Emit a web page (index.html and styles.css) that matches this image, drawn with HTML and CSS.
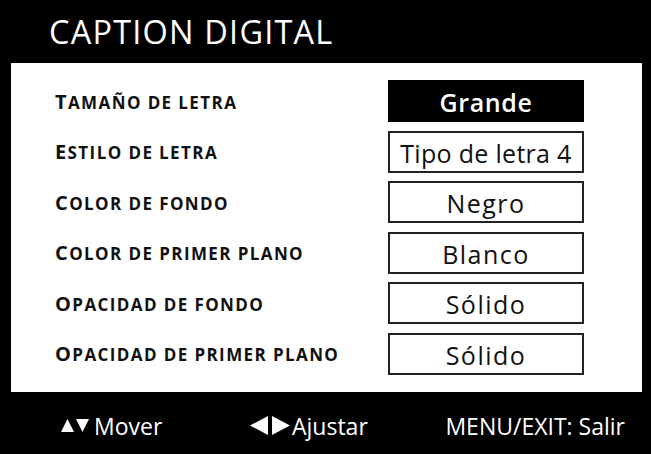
FILE: index.html
```html
<!DOCTYPE html>
<html>
<head>
    <title>Caption Digital</title>
    <link rel="stylesheet" href="styles.css">
</head>
<body>
    <div class="screen">
        <div class="title-bar">
            <h1 class="title">CAPTION DIGITAL</h1>
        </div>

        <div class="panel">
            <div class="option">
                <span class="option-label">Tamaño de letra</span>
                <span class="option-value selected">Grande</span>
            </div>
            <div class="option">
                <span class="option-label">Estilo de letra</span>
                <span class="option-value tight">Tipo de letra 4</span>
            </div>
            <div class="option">
                <span class="option-label">Color de fondo</span>
                <span class="option-value">Negro</span>
            </div>
            <div class="option">
                <span class="option-label">Color de primer plano</span>
                <span class="option-value">Blanco</span>
            </div>
            <div class="option">
                <span class="option-label">Opacidad de fondo</span>
                <span class="option-value">Sólido</span>
            </div>
            <div class="option">
                <span class="option-label">Opacidad de primer plano</span>
                <span class="option-value">Sólido</span>
            </div>
        </div>

        <div class="help-bar">
            <div class="hint hint-move">
                <svg class="arrows" width="28" height="13" viewBox="0 0 28 13">
                    <polygon points="0,13 6.5,0 13,13" fill="#fff"/>
                    <polygon points="15,0 28,0 21.5,13" fill="#fff"/>
                </svg>
                <span>Mover</span>
            </div>
            <div class="hint hint-adjust">
                <svg class="arrows" width="40" height="19" viewBox="0 0 40 19">
                    <polygon points="18,0 18,19 0,9.5" fill="#fff"/>
                    <polygon points="22,0 22,19 40,9.5" fill="#fff"/>
                </svg>
                <span>Ajustar</span>
            </div>
            <div class="hint hint-exit">MENU/EXIT: Salir</div>
        </div>
    </div>
</body>
</html>
```

FILE: styles.css
```css
body {
    margin: 0;
    background: #000;
    font-family: 'Open Sans', 'Noto Sans', sans-serif;
}

.screen {
    width: 651px;
    height: 454px;
    background: #000;
    display: flex;
    flex-direction: column;
}

/* Title */
.title-bar {
    height: 63px;
    display: flex;
    align-items: center;
    padding-left: 49px;
}

.title {
    margin: 0;
    color: #fff;
    font-size: 32.5px;
    font-weight: 400;
    letter-spacing: 1.2px;
}

/* Options panel */
.panel {
    height: 329px;
    margin: 0 9px 0 11px;
    background: #fff;
    box-sizing: border-box;
    padding: 17px 58px 0 44px;
    display: flex;
    flex-direction: column;
    gap: 8.6px;
}

.option {
    height: 42px;
    display: flex;
    align-items: center;
    justify-content: space-between;
}

.option-label {
    text-transform: uppercase;
    font-weight: 700;
    font-size: 17px;
    letter-spacing: 1.4px;
    color: #111;
}

.option-label::first-letter {
    font-size: 20px;
}

.option-value {
    width: 196px;
    height: 42px;
    box-sizing: border-box;
    border: 2px solid #222;
    display: flex;
    align-items: center;
    justify-content: center;
    padding-top: 2px;
    font-size: 25px;
    letter-spacing: 1.5px;
    color: #111;
}

.option-value.tight {
    letter-spacing: 0.3px;
}

.option-value.selected {
    background: #000;
    border-color: #000;
    color: #fff;
    font-weight: 600;
    letter-spacing: 0.6px;
}

/* Help bar */
.help-bar {
    flex: 1;
    display: flex;
    align-items: center;
    padding: 5px 26px 0 61px;
    color: #fff;
    font-size: 23px;
}

.hint {
    display: flex;
    align-items: center;
    gap: 5px;
}

.hint-move {
    width: 189px;
}

.hint-adjust {
    gap: 2px;
}

.hint-exit {
    margin-left: auto;
}
```
